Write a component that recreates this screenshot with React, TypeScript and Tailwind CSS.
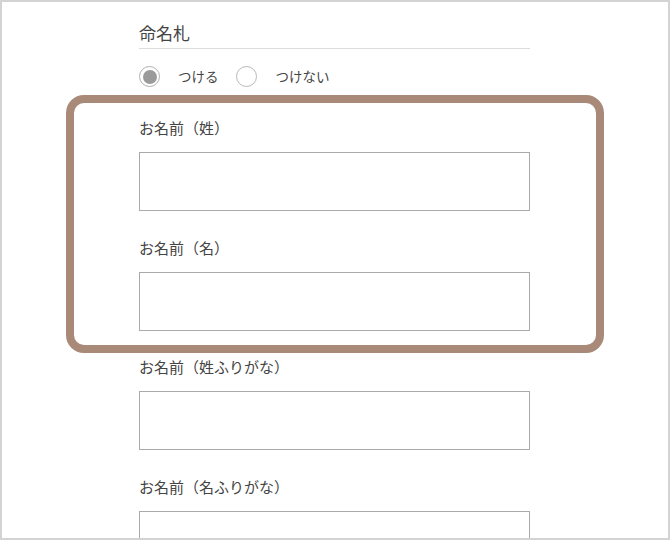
import React from "react";

const font = { fontFamily: '"Noto Sans CJK JP", "Noto Sans", sans-serif' };

function Field({ label, mt }: { label: string; mt: string }) {
  return (
    <div className={mt}>
      <div className="text-[15px] leading-[24px] text-[#444444]">{label}</div>
      <div className="mt-[12px] h-[59px] w-[391px] border border-[#aaaaaa] bg-white" />
    </div>
  );
}

export default function App() {
  return (
    <div
      className="relative h-[540px] w-[670px] overflow-hidden border-2 border-[#d3d3d3] bg-white"
      style={font}
    >
      <div className="pl-[137px]">
        <div className="mt-[19px] w-[391px] border-b border-[#dcdcdc] pb-[3px] text-[17px] leading-[24px] text-[#444444]">
          命名札
        </div>
        <div className="mt-[17px] flex h-[21px] items-center text-[13.5px] text-[#444444]">
          <span className="flex h-[21px] w-[21px] items-center justify-center rounded-full border border-[#b0b0b0]">
            <span className="h-[14px] w-[14px] rounded-full bg-[#9a9a9a]" />
          </span>
          <span className="ml-[18px]">つける</span>
          <span className="ml-[17px] h-[21px] w-[21px] rounded-full border border-[#b8b8b8]" />
          <span className="ml-[19px]">つけない</span>
        </div>
        <Field label="お名前（姓）" mt="mt-[29px]" />
        <Field label="お名前（名）" mt="mt-[25px]" />
        <Field label="お名前（姓ふりがな）" mt="mt-[24px]" />
        <Field label="お名前（名ふりがな）" mt="mt-[25px]" />
      </div>
      <div className="pointer-events-none absolute left-[64px] top-[93px] h-[258px] w-[538px] rounded-[18px] border-[8px] border-[#a98a79]" />
    </div>
  );
}
